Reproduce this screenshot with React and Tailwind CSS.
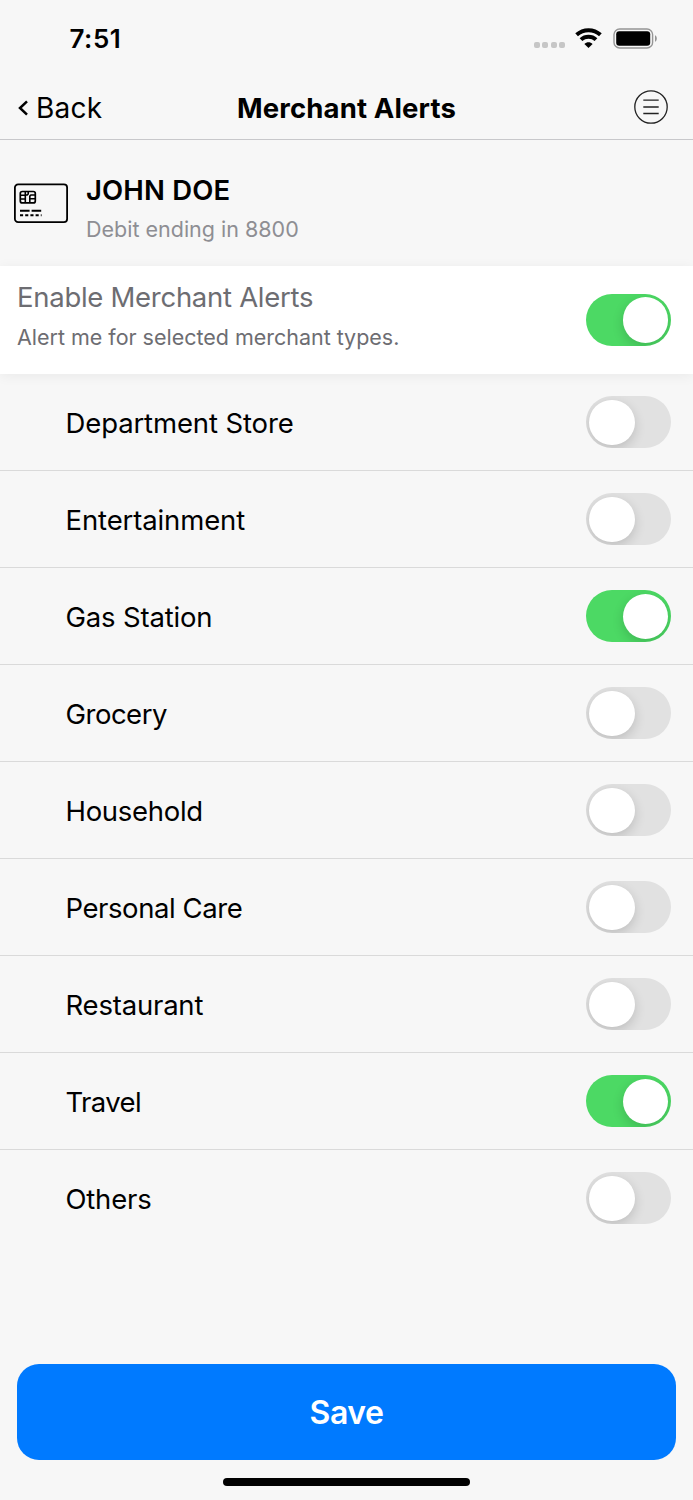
import { useState } from 'react';
import clsx from 'clsx';

const MERCHANT_TYPES = [
  { id: 'department', label: 'Department Store', tracking: 'tracking-[-0.12px]', enabled: false },
  { id: 'entertainment', label: 'Entertainment', tracking: 'tracking-[-0.12px]', enabled: false },
  { id: 'gas', label: 'Gas Station', tracking: 'tracking-[-0.18px]', enabled: true },
  { id: 'grocery', label: 'Grocery', tracking: 'tracking-[-0.5px]', enabled: false },
  { id: 'household', label: 'Household', tracking: 'tracking-[-0.3px]', enabled: false },
  { id: 'personal', label: 'Personal Care', tracking: 'tracking-[-0.43px]', enabled: false },
  { id: 'restaurant', label: 'Restaurant', tracking: 'tracking-[-0.2px]', enabled: false },
  { id: 'travel', label: 'Travel', tracking: 'tracking-[-0.6px]', enabled: true },
  { id: 'others', label: 'Others', tracking: 'tracking-[-0.2px]', enabled: false },
];

const Toggle = ({ checked, onChange, label }) => (
  <button
    type="button"
    role="switch"
    aria-checked={checked}
    aria-label={label}
    onClick={() => onChange(!checked)}
    className={clsx(
      'flex h-[52px] w-[85px] shrink-0 items-center overflow-hidden rounded-full px-[3px]',
      checked ? 'justify-end bg-[#4cd964]' : 'justify-start bg-[#e1e1e1]'
    )}
  >
    <span className="size-[45.5px] rounded-full bg-white shadow-[0_4px_12px_rgba(0,0,0,0.16)]" />
  </button>
);

const StatusBar = () => (
  <div className="flex h-[76px] items-center justify-between pl-[69.5px] pr-[35px]">
    <span className="pt-px text-[26px] font-semibold leading-8 tracking-[0.5px]">7:51</span>
    <div className="flex items-center">
      <div className="mt-[14px] flex gap-[2.5px]">
        {[0, 1, 2, 3].map(i => (
          <span key={i} className="size-[6px] rounded-[2px] bg-[#c6c6c6]" />
        ))}
      </div>
      <svg className="ml-[10px] h-[20px] w-[27px]" viewBox="0 0 27 20" fill="none">
        <path d="M1.6 6.8C8.4 .6 18.6 .6 25.4 6.8" stroke="#000" strokeWidth="4" />
        <path d="M6 11.6C10.2 7.7 16.8 7.7 21 11.6" stroke="#000" strokeWidth="4" />
        <path d="M13.5 20L9.4 15.9C11.7 13.8 15.3 13.8 17.6 15.9Z" fill="#000" />
      </svg>
      <svg className="ml-[11px] h-[21px] w-[45px]" viewBox="0 0 45 21" fill="none">
        <rect x="1" y="1" width="38.6" height="19" rx="5.6" stroke="#959595" strokeWidth="1.4" />
        <rect x="3.2" y="3.2" width="34" height="14.6" rx="3" fill="#000" />
        <path d="M42 7.2C44.4 8.2 44.4 12.8 42 13.8Z" fill="#959595" />
      </svg>
    </div>
  </div>
);

const CardIcon = () => (
  <svg className="h-[40px] w-[54px] shrink-0" viewBox="0 -0.5 54 40" fill="none" stroke="#000">
    <rect x="0.9" y="0.9" width="52.2" height="37.7" rx="3.2" strokeWidth="1.8" />
    <rect x="6.3" y="8" width="15" height="11.4" rx="2" strokeWidth="1.7" />
    <path
      d="M6.3 11.7H11.3M6.3 15.5H11.3M11.3 8V19.2M11.3 11.5H13.2L14.2 10.4V8M15.8 19.2V12.6L16.9 11.5H21.3M15.8 15.3H21.3"
      strokeWidth="1.6"
    />
    <path d="M6 27.2H15.6M17.6 27.2H27.2" strokeWidth="1.9" />
    <path d="M6 31.8H27.6" strokeWidth="1.9" strokeDasharray="3.1 2.1" />
  </svg>
);

export default function App() {
  const [alertsEnabled, setAlertsEnabled] = useState(true);
  const [merchants, setMerchants] = useState(MERCHANT_TYPES);

  const setMerchant = (id, enabled) => {
    setMerchants(merchants.map(m => (m.id === id ? { ...m, enabled } : m)));
  };

  return (
    <div className="flex h-[1500px] w-[693px] flex-col overflow-hidden bg-[#f7f7f7] font-['Inter',sans-serif] text-black">
      <StatusBar />

      {/* Navigation */}
      <header className="grid h-16 shrink-0 grid-cols-[1fr_auto_1fr] items-center border-b border-[#c8c8cb] px-[18px]">
        <button type="button" className="flex items-center gap-[7px] text-[28px] leading-8 tracking-[0.2px]">
          <svg className="h-[16px] w-[11px]" viewBox="0 0 11 16" fill="none">
            <path d="M9 1.3L2 8L9 14.7" stroke="#000" strokeWidth="2.5" />
          </svg>
          Back
        </button>
        <h1 className="text-[27.5px] font-bold leading-8 tracking-[0.15px]">Merchant Alerts</h1>
        <button type="button" aria-label="Menu" className="mb-px mr-[7px] justify-self-end">
          <svg className="size-[34px]" viewBox="0 0 34 34" fill="none" stroke="#222">
            <circle cx="17" cy="17" r="16.2" strokeWidth="1.3" />
            <path d="M9.3 10.2H24.7M9.3 17H24.7M9.3 23.5H24.7" strokeWidth="1.3" />
          </svg>
        </button>
      </header>

      {/* Card holder */}
      <section className="flex h-[126px] shrink-0 items-center gap-[18px] pl-[14px]">
        <CardIcon />
        <div className="pt-3">
          <h2 className="text-[27.5px] font-semibold leading-10 tracking-[0.15px]">JOHN DOE</h2>
          <p className="text-[21.5px] leading-[38px] text-[#8e8e93]">Debit ending in 8800</p>
        </div>
      </section>

      <section className="z-10 flex h-[108px] shrink-0 items-center justify-between bg-white pl-[17px] pr-[22px] shadow-[0_2px_12px_rgba(0,0,0,0.06)]">
        <div className="pb-[6px] text-[#6d6d72]">
          <h2 className="text-[27.5px] leading-10 tracking-[-0.28px]">Enable Merchant Alerts</h2>
          <p className="text-[21.5px] leading-10 tracking-[-0.02px]">Alert me for selected merchant types.</p>
        </div>
        <Toggle checked={alertsEnabled} onChange={setAlertsEnabled} label="Enable Merchant Alerts" />
      </section>

      {/* Merchant types */}
      <ul className="flex-1">
        {merchants.map(({ id, label, tracking, enabled }) => (
          <li
            key={id}
            className="flex h-[97px] items-center justify-between border-b border-[#dadada] pl-[65.5px] pr-[22px] pt-[0.8px] last:border-transparent"
          >
            <span className={clsx('pt-px text-[27.5px] leading-10', tracking)}>{label}</span>
            <Toggle checked={enabled} onChange={value => setMerchant(id, value)} label={label} />
          </li>
        ))}
      </ul>

      <footer className="flex shrink-0 flex-col items-center px-[17px] pb-[14px]">
        <button
          type="button"
          className="h-[95.5px] w-full rounded-[22px] bg-[#007aff] pt-[3px] text-[32px] font-semibold tracking-[-0.5px] text-white"
        >
          Save
        </button>
        <div className="mt-[18.5px] h-2 w-[247px] rounded-full bg-black" />
      </footer>
    </div>
  );
}
